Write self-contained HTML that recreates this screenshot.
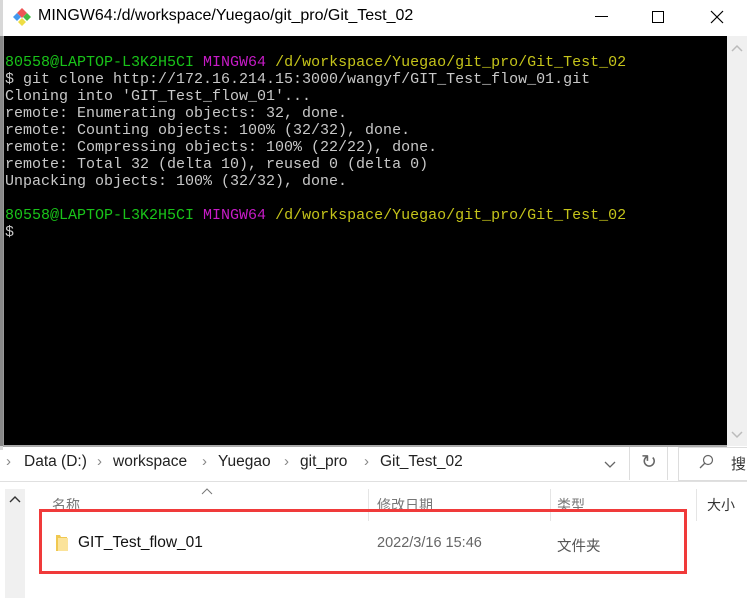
<!DOCTYPE html>
<html><head><meta charset="utf-8"><style>
*{margin:0;padding:0;box-sizing:border-box}
body{width:747px;height:598px;overflow:hidden;background:#fff;position:relative;font-family:"Liberation Sans","Noto Sans CJK SC",sans-serif}
.abs{position:absolute}
#term{left:3px;top:36px;width:724px;height:409px;background:#000;border-left:1px solid #999}
#term pre{position:absolute;left:1px;top:18px;font-family:"Liberation Mono",monospace;font-size:15px;line-height:17px;color:#c8c8c8;letter-spacing:0}
.g{color:#19c319}.m{color:#c71bc7}.y{color:#c5c41a}
.bc{position:absolute;top:453px;font-size:15.5px;color:#222}
.ar{position:absolute;top:453px;font-size:15px;color:#888}
.cn{color:#777;font-size:14px}
</style></head><body>
<div class="abs" style="left:0;top:0;width:3px;height:450px;background:#d8d8d8"></div>
<div class="abs" style="left:0;top:36px;width:3px;height:410px;background:#888"></div>
<svg class="abs" style="left:12px;top:7px" width="20" height="20" viewBox="0 0 20 20">
<path d="M10 1 L15 6 L10 11 L5 6Z" fill="#e55"/><path d="M15 6 L19 10 L15 14 L11 10Z" fill="#4b4"/><path d="M10 11 L14 15 L10 19 L6 15Z" fill="#ed4"/><path d="M5 6 L9 10 L5 14 L1 10Z" fill="#49e"/></svg>
<div class="abs" style="left:38px;top:7px;font-size:16px;color:#000">MINGW64:/d/workspace/Yuegao/git_pro/Git_Test_02</div>
<div class="abs" style="left:595px;top:16px;width:13px;height:1px;background:#000"></div>
<div class="abs" style="left:652px;top:11px;width:12px;height:12px;border:1px solid #000"></div>
<svg class="abs" style="left:710px;top:10px" width="14" height="14"><path d="M1 1L13 13M13 1L1 13" stroke="#000" stroke-width="1.2"/></svg>
<div id="term" class="abs"><pre><span class="g">80558@LAPTOP-L3K2H5CI</span> <span class="m">MINGW64</span> <span class="y">/d/workspace/Yuegao/git_pro/Git_Test_02</span>
$ git clone http://172.16.214.15:3000/wangyf/GIT_Test_flow_01.git
Cloning into 'GIT_Test_flow_01'...
remote: Enumerating objects: 32, done.
remote: Counting objects: 100% (32/32), done.
remote: Compressing objects: 100% (22/22), done.
remote: Total 32 (delta 10), reused 0 (delta 0)
Unpacking objects: 100% (32/32), done.

<span class="g">80558@LAPTOP-L3K2H5CI</span> <span class="m">MINGW64</span> <span class="y">/d/workspace/Yuegao/git_pro/Git_Test_02</span>
$</pre></div>
<div class="abs" style="left:727px;top:36px;width:20px;height:410px;background:#f0f0f0"></div>
<svg class="abs" style="left:731px;top:44px" width="12" height="8"><path d="M1 7L6 2L11 7" stroke="#bbb" fill="none" stroke-width="1.5"/></svg>
<svg class="abs" style="left:731px;top:431px" width="12" height="8"><path d="M1 1L6 6L11 1" stroke="#bbb" fill="none" stroke-width="1.5"/></svg>
<div class="abs" style="left:3px;top:445px;width:724px;height:2px;background:#aaa"></div>
<!-- explorer -->
<span class="ar" style="left:6px">›</span><span class="bc" style="left:24px">Data (D:)</span>
<span class="ar" style="left:97px">›</span><span class="bc" style="left:113px">workspace</span>
<span class="ar" style="left:202px">›</span><span class="bc" style="left:218px">Yuegao</span>
<span class="ar" style="left:284px">›</span><span class="bc" style="left:300px">git_pro</span>
<span class="ar" style="left:364px">›</span><span class="bc" style="left:380px">Git_Test_02</span>
<svg class="abs" style="left:423px;top:459px" width="0" height="0"></svg>
<svg class="abs" style="left:422px;top:459px" width="1" height="1"></svg>
<svg class="abs" style="left:423px;top:459px" width="1" height="1"></svg>
<svg class="abs" style="left:422px;top:459px" width="1" height="1"></svg>
<svg class="abs" style="left:422px;top:459px" width="1" height="1"></svg>
<svg class="abs" style="left:423px;top:460px" width="1" height="1"></svg>
<svg class="abs" style="left:423px;top:460px" width="1" height="1"></svg>
<svg class="abs" style="left:423px;top:461px" width="1" height="1"></svg>
<svg class="abs" style="left:423px;top:461px" width="1" height="1"></svg>
<svg class="abs" style="left:423px;top:461px" width="1" height="1"></svg>
<svg class="abs" style="left:604px;top:461px" width="12" height="8"><path d="M1 1L6 6L11 1" stroke="#666" fill="none" stroke-width="1.3"/></svg>
<div class="abs" style="left:629px;top:447px;width:1px;height:33px;background:#ddd"></div>
<div class="abs" style="left:641px;top:451px;color:#666;font-size:19px">↻</div>
<div class="abs" style="left:667px;top:447px;width:1px;height:33px;background:#ddd"></div>
<div class="abs" style="left:678px;top:447px;width:69px;height:34px;border:1px solid #ddd;border-right:none"></div>
<svg class="abs" style="left:698px;top:454px" width="16" height="16"><circle cx="10" cy="6" r="4.5" stroke="#666" fill="none" stroke-width="1.2"/><path d="M7 9L2 14" stroke="#666" stroke-width="1.3"/></svg>
<div class="abs" style="left:731px;top:453px;font-size:15px;color:#333">搜</div>
<div class="abs" style="left:0;top:481px;width:747px;height:1px;background:#e0e0e0"></div>
<div class="abs" style="left:5px;top:489px;width:20px;height:109px;background:#f0f0f0"></div>
<svg class="abs" style="left:9px;top:495px" width="12" height="8"><path d="M1 7L6 2L11 7" stroke="#333" fill="none" stroke-width="1.4"/></svg>
<svg class="abs" style="left:201px;top:488px" width="12" height="7"><path d="M1 6L6 1L11 6" stroke="#777" fill="none" stroke-width="1"/></svg>
<div class="abs" style="left:52px;top:495px"><span class="cn">名称</span></div>
<div class="abs" style="left:377px;top:495px"><span class="cn">修改日期</span></div>
<div class="abs" style="left:368px;top:489px;width:1px;height:32px;background:#e5e5e5"></div>
<div class="abs" style="left:557px;top:495px"><span class="cn">类型</span></div>
<div class="abs" style="left:550px;top:489px;width:1px;height:32px;background:#e5e5e5"></div>
<div class="abs" style="left:707px;top:495px"><span class="cn" style="color:#333">大小</span></div>
<div class="abs" style="left:696px;top:489px;width:1px;height:32px;background:#e5e5e5"></div>
<div class="abs" style="left:39px;top:509px;width:648px;height:65px;border:3px solid #f03a3a"></div>
<svg class="abs" style="left:55px;top:534px" width="14" height="18"><path d="M1 1h4l1 2h6v14H1z" fill="#f0c850"/><path d="M3 4h10v13H3z" fill="#fbe39a"/></svg>
<div class="abs" style="left:78px;top:534px;font-size:15.5px;color:#111">GIT_Test_flow_01</div>
<div class="abs" style="left:377px;top:535px;font-size:14.5px;color:#666">2022/3/16 15:46</div>
<div class="abs" style="left:557px;top:535px;font-size:14.5px;color:#555">文件夹</div>
</body></html>
